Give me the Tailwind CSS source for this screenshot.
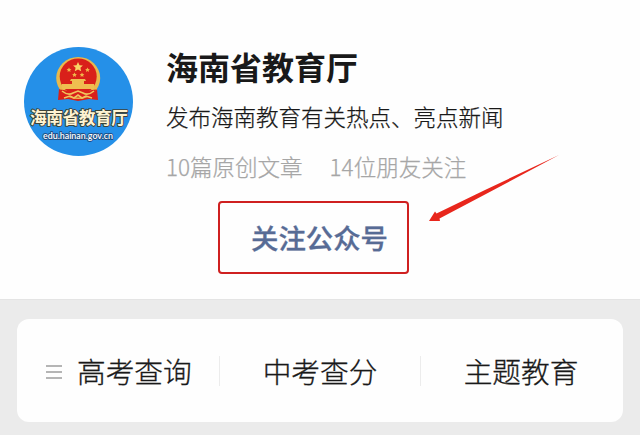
<!DOCTYPE html>
<html lang="zh-CN">
<head>
  <meta charset="UTF-8" />
  <title>海南省教育厅</title>
  <meta name="viewport" content="width=device-width, initial-scale=1.0" />
  <script src="https://cdn.jsdelivr.net/npm/@tailwindcss/browser@4"></script>
</head>
<body class="relative flex flex-col w-[640px] h-[435px] overflow-hidden bg-[#ebebeb] text-[#191919] font-['Noto_Sans_CJK_SC',sans-serif] whitespace-nowrap">

  <!-- Profile -->
  <header class="flex items-start h-[300px] shrink-0 bg-[#fefefe] border-b border-[#e4e4e4] pl-6">
    <svg class="mt-[47px] w-[109px] h-[109px] shrink-0" viewBox="0 0 109 109">
      <circle cx="54.5" cy="54.5" r="54.5" fill="#2590e8" />
      <!-- Emblem -->
      <path d="M35 42L34 53L44 52L54 54L65 52L74 53L73 42Z" fill="#d92017" />
      <ellipse cx="54.2" cy="31" rx="22" ry="21" fill="#e9b94c" />
      <ellipse cx="54.2" cy="29.5" rx="18.5" ry="18" fill="#d9201a" />
      <path d="M54 15l1.5 3.2 3.4.3-2.5 2.3.8 3.4-3.2-1.8-3.2 1.8.8-3.4-2.5-2.3 3.4-.3z" fill="#f8d566" />
      <path d="M45 20.5l.8 1.4 1.6.3-1.2 1.1.2 1.6-1.4-.8-1.4.8.2-1.6-1.2-1.1 1.6-.3zM63.5 20.5l.8 1.4 1.6.3-1.2 1.1.2 1.6-1.4-.8-1.4.8.2-1.6-1.2-1.1 1.6-.3zM50.5 25.5l.8 1.4 1.6.3-1.2 1.1.2 1.6-1.4-.8-1.4.8.2-1.6-1.2-1.1 1.6-.3zM58 25.5l.8 1.4 1.6.3-1.2 1.1.2 1.6-1.4-.8-1.4.8.2-1.6-1.2-1.1 1.6-.3z" fill="#f0b84a" />
      <path d="M47 32h14l1 2h-2v3h10v5h-32v-5h10v-3h-2z" fill="#efbd50" />
      <path d="M36 42.5q18 3 36 0l-1 6q-17 4-34 0z" fill="#d9201a" />
      <path d="M38 44q6 5 11 2l5-2 5 2q5 3 11-2M40 51l6-2 4 2 4-3 4 3 4-2 6 2" fill="none" stroke="#f0c45c" stroke-width="1.6" />
      <!-- Name plate -->
      <text x="6" y="77.3" textLength="98" lengthAdjust="spacing" font-size="16.8" font-weight="700" fill="#fff3d2" stroke="#3d4238" stroke-width="1.8" stroke-linejoin="round" paint-order="stroke">海南省教育厅</text>
      <text x="19" y="92" textLength="70" lengthAdjust="spacingAndGlyphs" font-size="10" font-weight="600" font-family="Lato, sans-serif" fill="#fff" stroke="#1d4f86" stroke-width="2" stroke-linejoin="round" paint-order="stroke">edu.hainan.gov.cn</text>
    </svg>
    <div class="ml-[33px] mt-[42px]">
      <h1 class="text-[32px] leading-[48px] font-bold">海南省教育厅</h1>
      <p class="mt-[9px] text-[22.5px] leading-[34px] font-light [-webkit-text-stroke:0.25px]">发布海南教育有关热点、亮点新闻</p>
      <p class="mt-[16px] flex gap-[27px] text-[22.5px] leading-[34px] font-light text-[#a6a6a6] [-webkit-text-stroke:0.25px]">
        <span>10篇原创文章</span><span>14位朋友关注</span>
      </p>
      <button class="ml-[52px] mt-[18px] flex items-center justify-center w-[191px] h-[73px] pl-3 border-2 border-[#cf2020] rounded-sm text-[27.4px] font-medium text-[#576b95] [-webkit-text-stroke:0.3px]">关注公众号</button>
    </div>
  </header>

  <!-- Menu -->
  <nav class="mx-[17px] mt-[19px] h-[103px] shrink-0 flex items-center rounded-xl bg-[#fefefe] text-[28.7px] font-light [-webkit-text-stroke:0.3px]">
    <a class="flex items-center w-[202px] pl-[29px]">
      <svg class="w-4 h-4 mr-[15px] mt-[3px]" viewBox="0 0 16 16" stroke="#b5b5b5" stroke-width="2">
        <path d="M0 2H16M0 8H16M0 14H16" />
      </svg>
      高考查询
    </a>
    <span class="w-px h-[30px] bg-[#ececec]"></span>
    <a class="w-[200px] text-center">中考查分</a>
    <span class="w-px h-[30px] bg-[#ececec]"></span>
    <a class="w-[200px] text-center">主题教育</a>
  </nav>

  <!-- Arrow to the follow button -->
  <svg class="absolute left-[428px] top-[154px] w-[132px] h-[68px]" viewBox="0 0 132 68">
    <path d="M131 1L57 40.5L11.5 64.5L12 67L1 67L7 57.5L8.500 59.500L57 36Z" fill="#e8261c" />
  </svg>
</body>
</html>
